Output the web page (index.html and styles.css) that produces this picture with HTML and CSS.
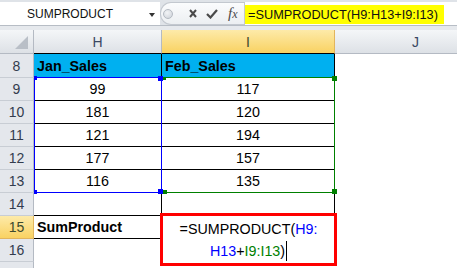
FILE: index.html
```html
<!DOCTYPE html>
<html lang="en">
<head>
    <meta charset="UTF-8">
    <meta name="viewport" content="width=device-width, initial-scale=1.0">
    <title>SUMPRODUCT</title>
    <link rel="stylesheet" href="styles.css">
</head>
<body>
    <div class="excel">
        <div class="formula-bar">
            <div class="name-box">
                <span class="name-text">SUMPRODUCT</span>
                <span class="name-arrow"></span>
            </div>
            <div class="fx-zone">
                <span class="grip"></span>
                <svg class="btn-cancel" width="8" height="9" viewBox="0 0 8 9">
                    <path d="M1 1 L7 8 M7 1 L1 8" stroke="#4a4a4a" stroke-width="2" fill="none"/>
                </svg>
                <svg class="btn-enter" width="12" height="10" viewBox="0 0 12 10">
                    <path d="M1 5 L4.5 8.5 L11 1" stroke="#4a4a4a" stroke-width="2.2" fill="none"/>
                </svg>
                <span class="btn-fx">f<span class="fx-x">x</span></span>
            </div>
            <div class="formula-input">
                <span class="formula-text">=SUMPRODUCT(H9:H13+I9:I13)</span>
            </div>
        </div>
        <div class="strip"></div>

        <div class="sheet">
            <div class="cell ch corner"><span class="corner-tri"></span></div>
            <div class="cell ch top-black">H</div>
            <div class="cell ch sel top-black">I</div>
            <div class="cell ch">J</div>

            <div class="cell rh">8</div>
            <div class="cell boxed head">Jan_Sales</div>
            <div class="cell boxed head">Feb_Sales</div>
            <div class="cell"></div>

            <div class="cell rh">9</div>
            <div class="cell boxed num">99</div>
            <div class="cell boxed num">117</div>
            <div class="cell"></div>

            <div class="cell rh">10</div>
            <div class="cell boxed num">181</div>
            <div class="cell boxed num">120</div>
            <div class="cell"></div>

            <div class="cell rh">11</div>
            <div class="cell boxed num">121</div>
            <div class="cell boxed num">194</div>
            <div class="cell"></div>

            <div class="cell rh">12</div>
            <div class="cell boxed num">177</div>
            <div class="cell boxed num">157</div>
            <div class="cell"></div>

            <div class="cell rh">13</div>
            <div class="cell boxed num">116</div>
            <div class="cell boxed num">135</div>
            <div class="cell"></div>

            <div class="cell rh">14</div>
            <div class="cell boxed"></div>
            <div class="cell boxed"></div>
            <div class="cell"></div>

            <div class="cell rh sel">15</div>
            <div class="cell boxed label">SumProduct</div>
            <div class="cell boxed"></div>
            <div class="cell"></div>

            <div class="cell rh">16</div>
            <div class="cell"></div>
            <div class="cell"></div>
            <div class="cell"></div>

            <div class="cell rh"></div>
            <div class="cell"></div>
            <div class="cell"></div>
            <div class="cell"></div>

            <!-- range highlights for the references in the formula -->
            <div class="range range-green">
                <span class="handle g-tl"></span>
                <span class="handle g-tr"></span>
                <span class="handle g-bl"></span>
                <span class="handle g-br"></span>
            </div>
            <div class="range range-blue">
                <span class="handle b-tl"></span>
                <span class="handle b-tr"></span>
                <span class="handle b-bl"></span>
                <span class="handle b-br"></span>
            </div>

            <!-- cell I15 in edit mode -->
            <div class="editor">=SUMPRODUCT(<span class="ref-blue">H9:</span><br><span class="ref-blue">H13</span>+<span class="ref-green">I9:I13</span>)<span class="caret"></span></div>
        </div>
    </div>
</body>
</html>
```

FILE: styles.css
```css
body {
    margin: 0;
    font-family: "Liberation Sans", Arial, sans-serif;
    background-color: #fff;
}

.excel {
    width: 457px;
    height: 268px;
    overflow: hidden;
}

/* formula bar */
.formula-bar {
    display: flex;
    height: 26px;
    box-sizing: border-box;
    padding-top: 2px;
    background-color: #dfe3e8;
    border-bottom: 1px solid #b7bdc5;
}

.name-box {
    display: flex;
    align-items: center;
    width: 160px;
    box-sizing: border-box;
    padding-left: 27px;
    background-color: #fff;
    font-size: 12px;
    color: #111;
}

.name-arrow {
    margin-left: auto;
    margin-right: 5px;
    margin-top: 2px;
    border-left: 3.5px solid transparent;
    border-right: 3.5px solid transparent;
    border-top: 4px solid #333;
}

.fx-zone {
    display: flex;
    align-items: center;
    width: 84px;
    box-sizing: border-box;
    background: linear-gradient(#fbfcfd, #eceff2);
    border: 1px solid #c3c8cf;
    border-right: none;
    border-radius: 11px 0 0 11px;
}

.grip {
    width: 8px;
    height: 8px;
    margin-left: 2px;
    border-radius: 50%;
    border: 1px solid #b4bac2;
    background: radial-gradient(circle at 40% 35%, #f2f4f6, #ccd1d8);
}

.btn-cancel {
    margin-left: 16px;
}

.btn-enter {
    margin-left: 9px;
}

.btn-fx {
    margin-left: 10px;
    font-family: "Liberation Serif", serif;
    font-style: italic;
    font-size: 15px;
    color: #4a4a4a;
}

.fx-x {
    font-size: 12px;
}

.formula-input {
    flex: 1;
    background-color: #fff;
    border-left: 1px solid #c3c8cf;
}

.formula-text {
    display: inline-block;
    height: 19px;
    margin-top: 3px;
    padding: 0 6px 0 3px;
    line-height: 19px;
    font-size: 12.75px;
    color: #111;
    background-color: #ffff00;
}

.strip {
    height: 4px;
    background-color: #e6e9ed;
}

/* grid */
.sheet {
    position: relative;
    display: grid;
    grid-template-columns: 34px 128px 173px 162px;
    grid-template-rows: 24px 24px repeat(9, 23px);
    width: 457px;
    overflow: hidden;
}

.cell {
    display: flex;
    align-items: center;
    box-sizing: border-box;
    overflow: hidden;
    white-space: nowrap;
    border-right: 1px solid transparent;
    border-bottom: 1px solid transparent;
    font-size: 14.3px;
    color: #000;
}

.ch {
    justify-content: center;
    font-size: 14px;
    color: #3a4862;
    background: linear-gradient(#f4f6f8, #dde1e6);
    border-right-color: #b4bac3;
    border-bottom-color: #b4bac3;
}

.rh {
    justify-content: center;
    font-size: 14px;
    color: #333c4e;
    background-color: #e4e7ec;
    border-right-color: #b4bac3;
    border-bottom-color: #c8cdd4;
}

.sel {
    color: #3d4a2e;
    background: linear-gradient(#fdeaa9, #f9d262);
    border-right-color: #e2b55d;
    border-bottom-color: #e2b55d;
}

.top-black {
    border-bottom-color: #000;
}

.corner {
    position: relative;
}

.corner-tri {
    position: absolute;
    right: 5px;
    bottom: 4px;
    border-left: 13px solid transparent;
    border-bottom: 13px solid #b9bfc7;
}

.boxed {
    border-right-color: #000;
    border-bottom-color: #000;
}

.head {
    padding-left: 3px;
    font-weight: bold;
    background-color: #00b0f0;
}

.num {
    justify-content: center;
}

.label {
    padding-left: 3px;
    font-weight: bold;
}

/* reference highlights */
.range {
    position: absolute;
    top: 47px;
    height: 116px;
    box-sizing: border-box;
    border: 1px solid;
}

.range-blue {
    left: 34px;
    width: 128px;
    border-color: #0000ff;
}

.range-green {
    left: 161px;
    width: 174px;
    border-color: #008000;
}

.handle {
    position: absolute;
    width: 4px;
    height: 4px;
}

.b-tl, .b-tr, .b-bl, .b-br {
    background-color: #0000ff;
}

.g-tl, .g-tr, .g-bl, .g-br {
    background-color: #008000;
}

.b-tl { left: -1px; top: -2px; width: 3px; }
.b-tr { right: -2px; top: -2px; width: 5px; height: 5px; }
.b-bl { left: -1px; bottom: -2px; width: 3px; }
.b-br { right: -2px; bottom: -2px; width: 5px; height: 5px; }
.g-tl { left: 1px; top: -1px; width: 3px; height: 3px; }
.g-tr { right: -3px; top: -2px; width: 5px; height: 5px; }
.g-bl { left: 1px; bottom: -2px; }
.g-br { right: -3px; bottom: -2px; width: 5px; height: 5px; }

/* in-cell editor */
.editor {
    position: absolute;
    left: 160px;
    top: 183px;
    width: 177px;
    height: 53px;
    box-sizing: border-box;
    padding-top: 2px;
    border: 3px solid #ff0000;
    background-color: #fff;
    text-align: center;
    font-size: 14.3px;
    line-height: 22px;
    color: #000;
    white-space: nowrap;
}

.ref-blue {
    color: #0000ff;
}

.ref-green {
    color: #008000;
}

.caret {
    display: inline-block;
    width: 1px;
    height: 20px;
    margin-left: 1px;
    vertical-align: -5px;
    background-color: #000;
}
```
